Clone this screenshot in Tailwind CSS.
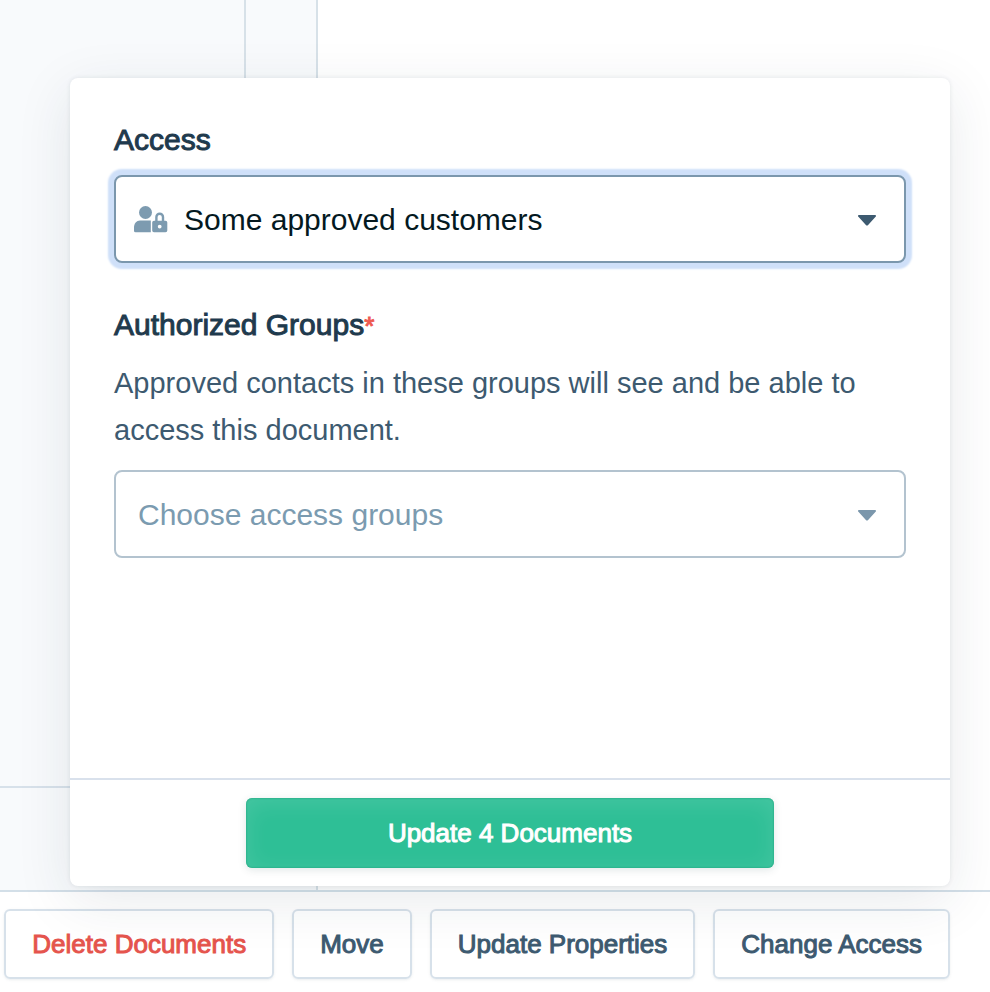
<!DOCTYPE html>
<html lang="en">
<head>
<meta charset="utf-8">
<meta name="viewport" content="width=device-width, initial-scale=1">
<title>Change Access</title>
<script src="https://cdn.jsdelivr.net/npm/@tailwindcss/browser@4"></script>
</head>
<body class="flex min-h-screen flex-col overflow-hidden bg-white font-['Liberation_Sans',Arial,sans-serif] text-[#3d5a70]">
  <main class="flex flex-1">
    <aside class="flex w-[318px] flex-col border-r-2 border-[#d7e1e8] bg-[#f8fafc]">
      <div class="flex flex-1 border-b-2 border-[#d7e1ea]">
        <div class="w-[246px] border-r-2 border-[#d7e1e8]"></div>
      </div>
      <div class="h-[102px]"></div>
    </aside>
    <section class="flex-1"></section>
  </main>

  <footer class="relative flex justify-end gap-[18px] border-t-2 border-[#d3dfe8] bg-white pt-[17px] pr-10 pb-[13px] text-[26px]">
    <button type="button" class="h-[70px] rounded-md border-2 border-[#d7e1ea] px-[26px] whitespace-nowrap text-[#e5544d] shadow-sm shadow-slate-500/10 [-webkit-text-stroke:1px]">Delete Documents</button>
    <button type="button" class="h-[70px] rounded-md border-2 border-[#d7e1ea] px-[26px] whitespace-nowrap shadow-sm shadow-slate-500/10 [-webkit-text-stroke:1px]">Move</button>
    <button type="button" class="h-[70px] rounded-md border-2 border-[#d7e1ea] px-[26px] whitespace-nowrap shadow-sm shadow-slate-500/10 [-webkit-text-stroke:1px]">Update Properties</button>
    <button type="button" class="h-[70px] rounded-md border-2 border-[#d7e1ea] px-[26px] whitespace-nowrap shadow-sm shadow-slate-500/10 [-webkit-text-stroke:1px]">Change Access</button>

    <form class="absolute right-10 bottom-full left-[70px] mb-[6px] rounded-lg bg-white shadow-[0_0_4px_rgba(30,45,70,0.10),0_14px_56px_rgba(30,45,70,0.10)]">
      <div class="min-h-[700px] px-11 pt-10 text-[30px]">
        <label for="access" class="block leading-[44px] text-[#1f3a4d] [-webkit-text-stroke:1px]">Access</label>
        <div class="relative mt-[13px]">
          <select id="access" class="block h-[88px] w-full appearance-none rounded-lg border-2 border-[#7b97ad] bg-white pr-16 pl-[68px] text-[#04191f] shadow-[0_0_2px_6px_#cfe0f9] outline-none">
            <option selected>Some approved customers</option>
            <option>All customers</option>
          </select>
          <svg class="pointer-events-none absolute top-[31px] left-5 h-[27px] w-[34px]" viewBox="0 0 34 27" fill="#7d9bb0" aria-hidden="true">
            <circle cx="11.5" cy="6.5" r="6.5"/>
            <path d="M6 14.500h10.800v11.800H1.500A1.500 1.500 0 0 1 0 24.800v-3.300c0-4 2.500-7 6-7z"/>
            <path fill-rule="evenodd" d="M20 14.800h11.500a1.800 1.800 0 0 1 1.800 1.800v7.900a1.800 1.800 0 0 1-1.800 1.800H20a1.800 1.800 0 0 1-1.800-1.800v-7.900a1.800 1.800 0 0 1 1.800-1.800zM25.700 18.700a1.900 1.900 0 1 0 0 3.800a1.900 1.900 0 0 0 0-3.800z"/>
            <path d="M22.400 15.500v-4.500a3.300 3.300 0 0 1 6.600 0v4.500" fill="none" stroke="#7d9bb0" stroke-width="2.400"/>
          </svg>
          <svg class="pointer-events-none absolute top-[40px] right-[30px] h-[11px] w-[18px]" viewBox="0 0 18 11" fill="#3d5a70" aria-hidden="true"><path d="M1.200 0h15.600c1.100 0 1.600 1 .8 1.800L10.100 10c-.7.700-1.500.7-2.200 0L.4 1.800C-.4 1 .1 0 1.200 0z"/></svg>
        </div>

        <label for="groups" class="mt-10 block leading-[44px] text-[#1f3a4d] [-webkit-text-stroke:1px]">Authorized Groups<span class="text-[26px] text-[#ee5a50]">*</span></label>
        <p id="groups-help" class="mt-3 text-[29px] leading-[47px]">Approved contacts in these groups will see and be able to access this document.</p>
        <div class="relative mt-4">
          <select id="groups" required aria-describedby="groups-help" class="block h-[88px] w-full appearance-none rounded-lg border-2 border-[#b3c3cf] bg-white pr-16 pl-[22px] text-[#7b9bb0] outline-none">
            <option value="" selected>Choose access groups</option>
          </select>
          <svg class="pointer-events-none absolute top-[40px] right-[30px] h-[11px] w-[18px]" viewBox="0 0 18 11" fill="#7b97ac" aria-hidden="true"><path d="M1.200 0h15.600c1.100 0 1.600 1 .8 1.800L10.100 10c-.7.700-1.500.7-2.200 0L.4 1.800C-.4 1 .1 0 1.200 0z"/></svg>
        </div>
      </div>
      <div class="flex justify-center border-t-2 border-[#d9e1ec] py-[18px]">
        <button type="submit" class="h-[70px] w-3/5 rounded-md bg-[#2ebf96] text-[26px] text-white shadow-[0_2px_8px_rgba(20,60,60,0.12),inset_0_0_2px_rgba(20,150,110,0.9),inset_0_4px_24px_rgba(255,255,255,0.12)] [-webkit-text-stroke:1px]">Update 4 Documents</button>
      </div>
    </form>
  </footer>
</body>
</html>
